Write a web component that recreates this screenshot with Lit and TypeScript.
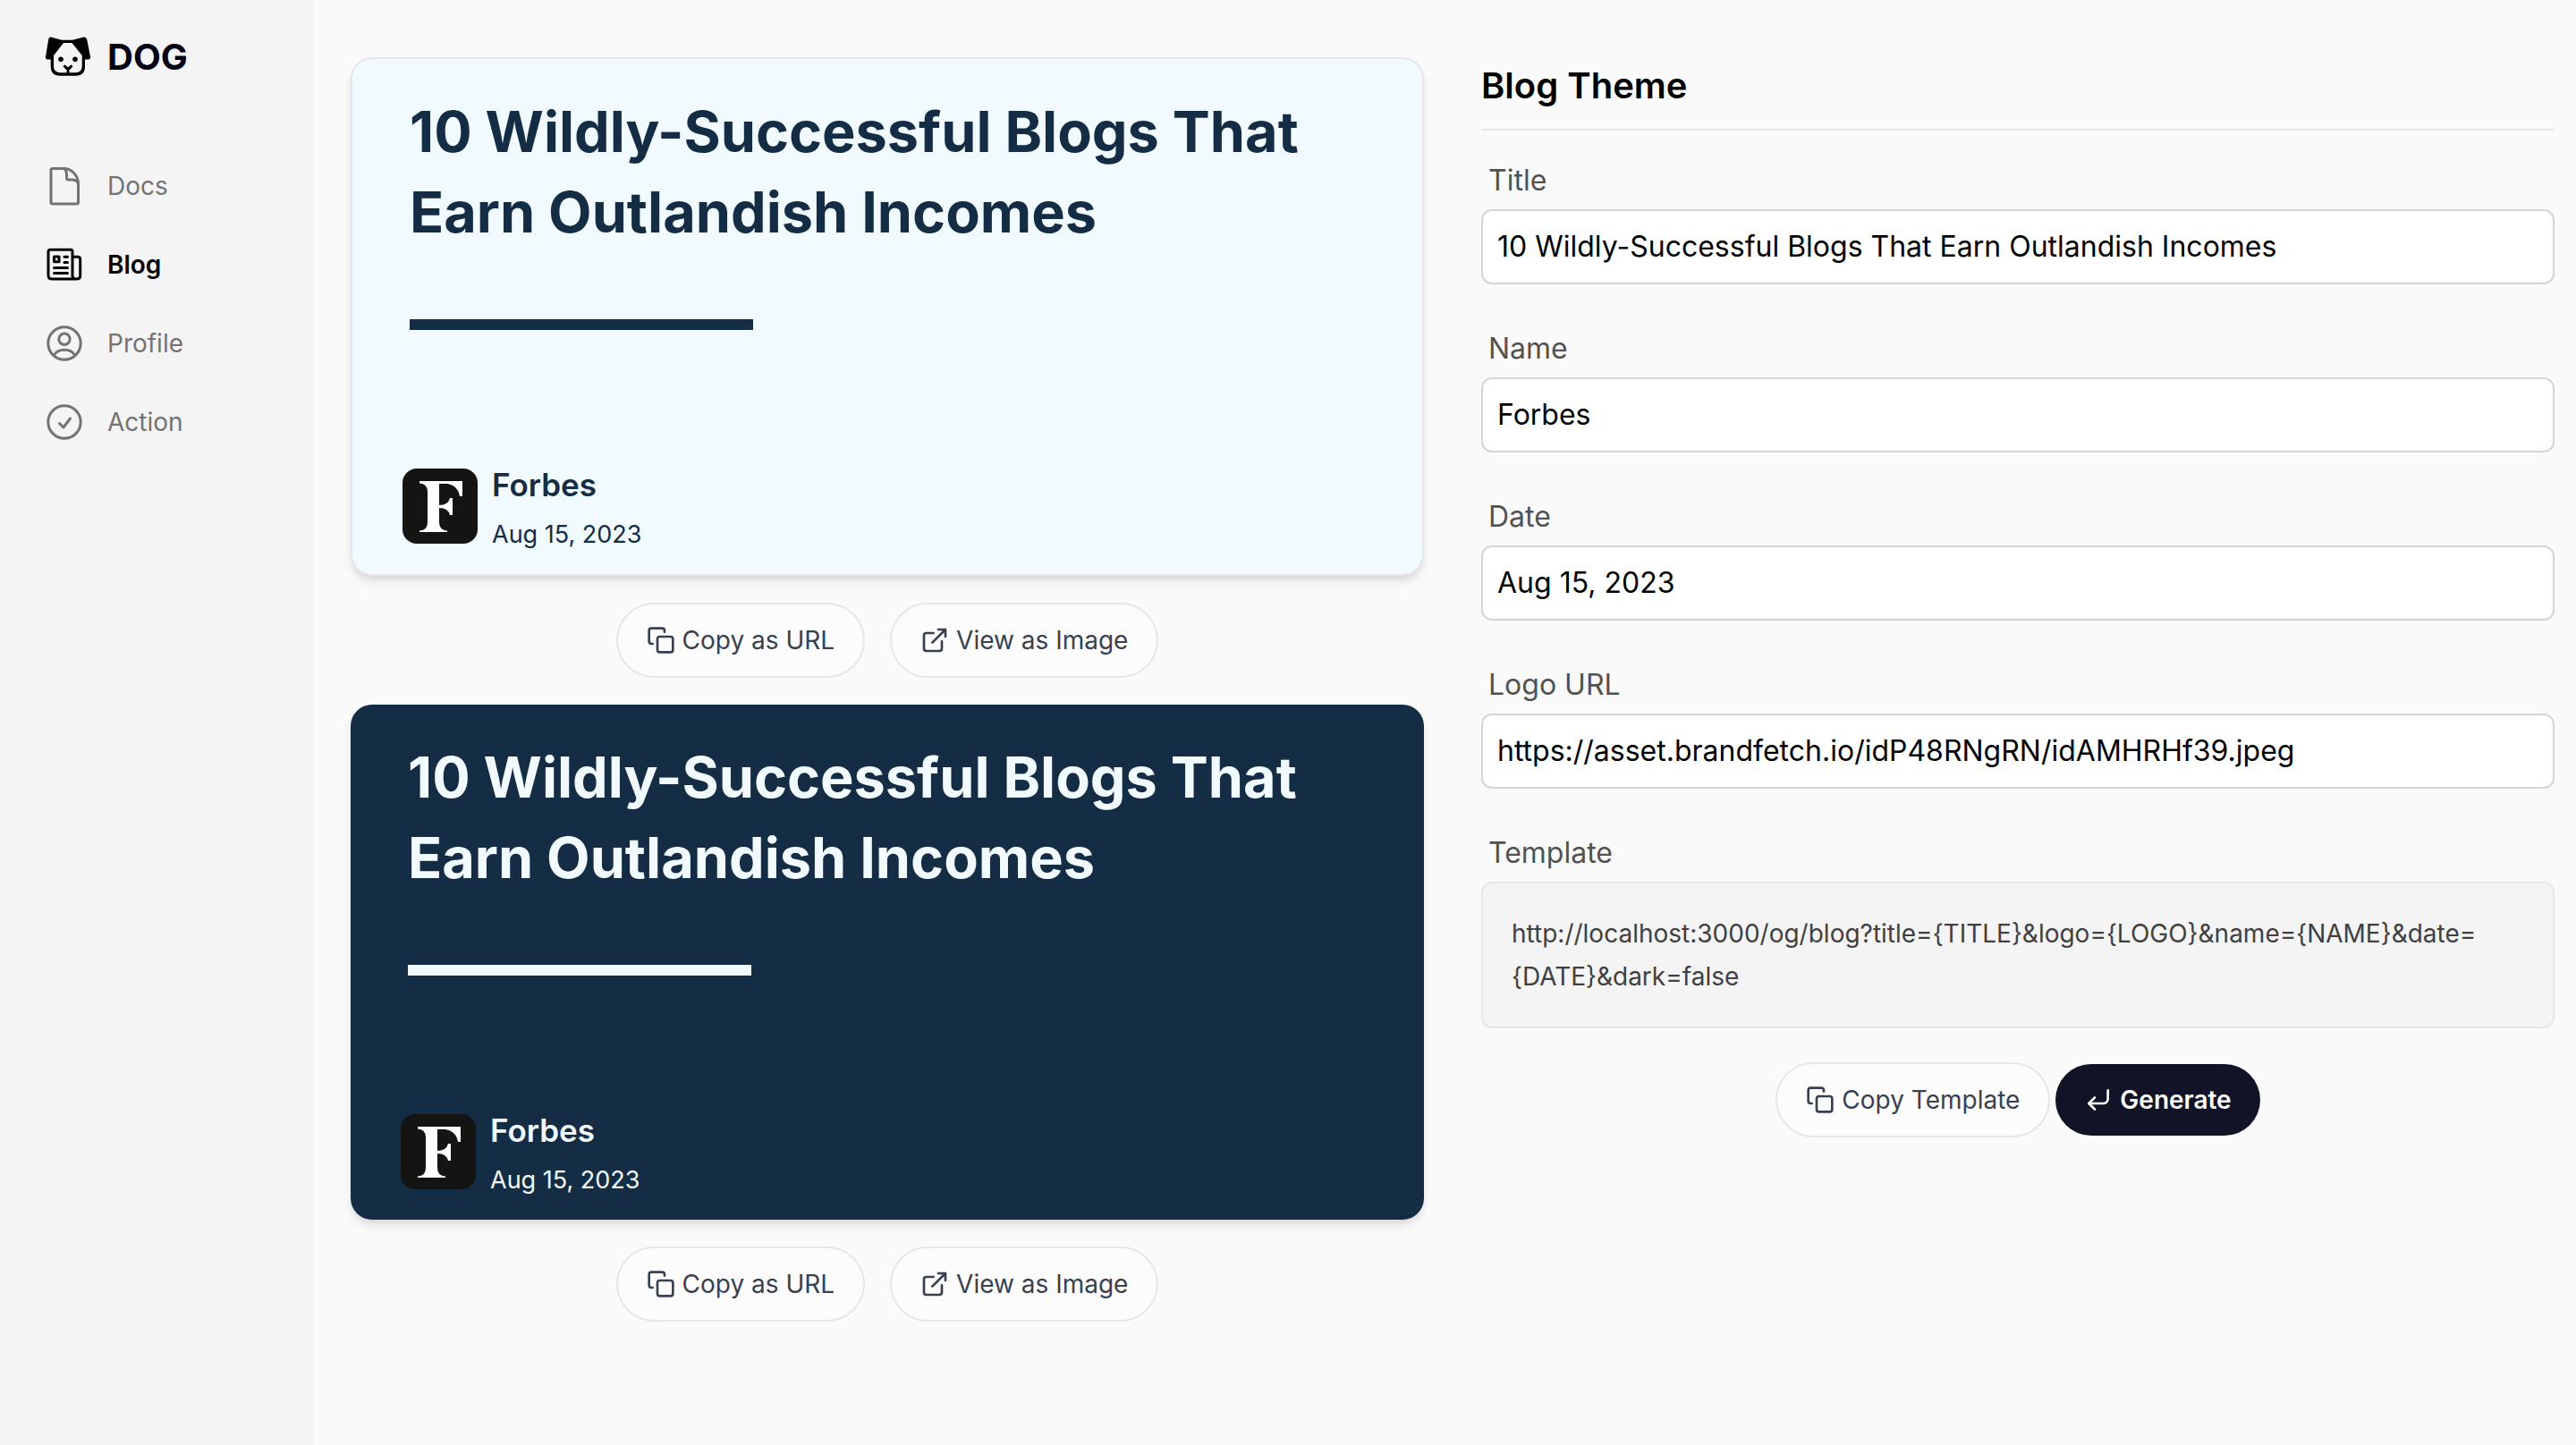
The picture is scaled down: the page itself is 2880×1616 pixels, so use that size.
import { LitElement, html, css, svg } from "lit";
import { customElement, property, state } from "lit/decorators.js";
import { classMap } from "lit/directives/class-map.js";

const logoMark = html`<svg class="mark" viewBox="0 0 54 46" aria-hidden="true">
  <path d="M9 1.500 L21 4.700 H33 L45.500 1.500 Q48.500 1 49.200 4 L53 23.500 Q53.500 26.500 50.500 26.500 H47 V34 Q47 44.700 36.500 44.700 H19 Q8.700 44.700 8.700 34 V26.500 H5.500 Q2.500 26.500 3 23.500 L6.200 4 Q6.500 1 9 1.500Z" fill="currentColor"/>
  <path d="M23 8 H32.500 L43.700 22 V34 Q43.700 41.200 36.500 41.200 H19.500 Q12 41.200 12 34 V22Z" fill="#f4f4f4"/>
  <circle cx="20" cy="26.300" r="2.800" fill="currentColor"/>
  <circle cx="36" cy="26.300" r="2.800" fill="currentColor"/>
  <path d="M24.300 34.200 L28 37.700 L31.700 34.200 M28 37.700 V42" fill="none" stroke="currentColor" stroke-width="3" stroke-linecap="round" stroke-linejoin="round"/>
</svg>`;

const navIcons: Record<string, unknown> = {
  Docs: svg`<path d="M8 2.500H21C30 2.500 37.500 10 37.500 19.500V40.500Q37.500 42 36 42H8.500Q7 42 7 40.500V4Q7 2.500 8.500 2.500M21 2.500C24 4 24.500 6.500 24.500 9V13Q24.500 15 26.500 15H30C34 15 36.500 16.500 37.500 19.500"/>`,
  Blog: svg`<path d="M6.500 5.300H29Q31 5.300 31 7.300V34.500Q31 38 35 38H8Q4 38 4 34V7.800Q4 5.300 6.500 5.300ZM31 13.300H37Q39.700 13.300 39.700 16V34.500Q39.700 38 35.500 38H35"/><path d="M10.500 13H16V18.700H10.500ZM22 13.300H25.500M22 19.600H25.500M10.500 25.500H25.500M10.500 31.500H25.500"/>`,
  Profile: svg`<circle cx="22" cy="22" r="18.200"/><circle cx="22" cy="17.300" r="6.200"/><path d="M10.500 35Q14 29.300 22 29.300T33.500 35"/>`,
  Action: svg`<circle cx="22" cy="22" r="18.200"/><path d="M16.500 23.500L21 28L28.500 18"/>`,
};

const icons: Record<string, unknown> = {
  copy: svg`<rect x="9" y="9" width="13" height="13" rx="2"/><path d="M5 15H4a2 2 0 0 1-2-2V4a2 2 0 0 1 2-2h9a2 2 0 0 1 2 2v1"/>`,
  open: svg`<path d="M18 13v6a2 2 0 0 1-2 2H5a2 2 0 0 1-2-2V8a2 2 0 0 1 2-2h6M15 3h6v6M10 14L21 3"/>`,
  enter: svg`<path d="M9 10l-5 5 5 5"/><path d="M20 4v7a4 4 0 0 1-4 4H4"/>`,
};
const icon = (name: string) =>
  html`<svg class="icon" viewBox="0 0 24 24" aria-hidden="true">${icons[name]}</svg>`;

@customElement("og-card")
export class OgCard extends LitElement {
  @property() heading = "";
  @property() name = "";
  @property() date = "";
  @property({ type: Boolean, reflect: true }) dark = false;

  static styles = css`
    :host {
      display: block;
      box-sizing: border-box;
      border: 2px solid #e5e7eb;
      border-radius: 24px;
      background: #f1fafe;
      color: #152c45;
      box-shadow: 0 8px 12px -2px rgb(0 0 0 / 0.1), 0 4px 8px -4px rgb(0 0 0 / 0.1);
    }
    :host([dark]) {
      border: 0;
      background: #152c45;
      color: #f1fafe;
    }
    .card {
      box-sizing: border-box;
      min-height: 576px;
      display: flex;
      flex-direction: column;
      padding: 36px 56px 20px;
    }
    .heading {
      margin: 0;
      padding: 0 8px;
      font-size: 63px;
      font-weight: 700;
      line-height: 90px;
      max-width: 1040px;
    }
    .rule {
      width: 384px;
      height: 12px;
      margin: 75px 8px 0;
      background: currentColor;
    }
    .author {
      display: flex;
      align-items: flex-start;
      gap: 16px;
      margin-top: auto;
    }
    .logo {
      width: 84px;
      height: 84px;
      flex: none;
      margin-top: 6px;
    }
    .who {
      display: flex;
      flex-direction: column;
      gap: 8px;
    }
    .name {
      font-size: 35px;
      line-height: 48px;
      font-weight: 600;
    }
    .date {
      font-size: 27px;
      line-height: 48px;
    }
  `;

  render() {
    return html`<article class="card">
      <h2 class="heading">${this.heading}</h2>
      <div class="rule"></div>
      <div class="author">
        <svg class="logo" viewBox="0 0 84 84" role="img" aria-label="Forbes logo">
          <rect width="84" height="84" rx="16" fill="#141413"/>
          <path fill="#fff" d="M19 14H67V31H64Q62 19 50 17H41V41Q51 41 53 33H56V52H53Q51 44 41 44V60Q41 69 50 69.500V71H19V69.500Q28 69 28 60V26Q28 17 19 16.500Z"/>
        </svg>
        <div class="who">
          <span class="name">${this.name}</span>
          <span class="date">${this.date}</span>
        </div>
      </div>
    </article>`;
  }
}

@customElement("app-root")
export class AppRoot extends LitElement {
  @state() private fields = [
    { id: "title", label: "Title", value: "10 Wildly-Successful Blogs That Earn Outlandish Incomes" },
    { id: "name", label: "Name", value: "Forbes" },
    { id: "date", label: "Date", value: "Aug 15, 2023" },
    { id: "logo", label: "Logo URL", value: "https://asset.brandfetch.io/idP48RNgRN/idAMHRHf39.jpeg" },
  ];

  static styles = css`
    :host {
      display: grid;
      grid-template-columns: 352px minmax(0, 1fr);
      min-height: 100vh;
      background: #fafafa;
      color: #000;
      font-family: Inter, "Liberation Sans", sans-serif;
      font-size: 28px;
    }
    .side {
      background: #f4f4f4;
      padding: 32px 48px;
    }
    .brand {
      display: flex;
      align-items: center;
      gap: 18px;
      height: 62px;
      color: #030014;
      font-size: 40px;
      font-weight: 700;
      text-decoration: none;
    }
    .mark {
      width: 54px;
      height: 46px;
      color: #000;
    }
    .nav {
      display: flex;
      flex-direction: column;
      gap: 40px;
      margin-top: 90px;
    }
    .link {
      display: flex;
      align-items: center;
      gap: 26px;
      height: 48px;
      padding-left: 2px;
      color: #737373;
      text-decoration: none;
    }
    .link.active {
      color: #000;
      font-weight: 600;
    }
    .glyph {
      width: 44px;
      height: 44px;
      fill: none;
      stroke: currentColor;
      stroke-width: 3;
      stroke-linecap: round;
      stroke-linejoin: round;
    }
    .main {
      display: grid;
      grid-template-columns: repeat(2, minmax(0, 1fr));
      gap: 64px;
      align-items: start;
      padding: 64px 24px 64px 40px;
    }
    .previews {
      display: flex;
      flex-direction: column;
      gap: 30px;
    }
    .actions {
      display: flex;
      justify-content: center;
      align-items: center;
      gap: 28px;
    }
    .form .actions {
      gap: 6px;
      margin-top: 38px;
    }
    .btn {
      display: flex;
      align-items: center;
      gap: 8px;
      padding: 16px 32px;
      border: 2px solid #e5e7eb;
      border-radius: 42px;
      background: #fcfcfd;
      color: #374151;
      font: inherit;
      line-height: 48px;
    }
    .btn.primary {
      border: 0;
      background: #111427;
      color: #fff;
      font-weight: 600;
    }
    .icon {
      width: 32px;
      height: 32px;
      fill: none;
      stroke: currentColor;
      stroke-width: 2;
      stroke-linecap: round;
      stroke-linejoin: round;
    }
    .title {
      margin: 0 0 32px;
      padding-bottom: 16px;
      border-bottom: 2px solid #e5e7eb;
      font-size: 40px;
      line-height: 64px;
      font-weight: 600;
    }
    .field {
      display: flex;
      flex-direction: column;
      gap: 8px;
      margin-bottom: 48px;
    }
    .label {
      padding-left: 8px;
      color: #525252;
      font-size: 32px;
      line-height: 48px;
    }
    .input {
      box-sizing: border-box;
      width: 100%;
      height: 84px;
      padding: 0 16px 2px;
      border: 2px solid #d4d4d4;
      border-radius: 12px;
      background: #fff;
      color: #000;
      font: inherit;
      font-size: 32px;
    }
    .template {
      display: block;
      padding: 32px;
      border: 2px solid #e5e7eb;
      border-radius: 12px;
      background: #f4f4f4;
      color: #404040;
      line-height: 48px;
      overflow-wrap: anywhere;
    }
    .field.last {
      margin-bottom: 0;
    }
  `;

  private onInput(id: string, e: Event) {
    const value = (e.target as HTMLInputElement).value;
    this.fields = this.fields.map((f) => (f.id === id ? { ...f, value } : f));
  }

  private preview(dark: boolean) {
    const [title, name, date] = this.fields;
    return html`<og-card
        ?dark=${dark}
        .heading=${title.value}
        .name=${name.value}
        .date=${date.value}
      ></og-card>
      <div class="actions">
        <button class="btn" type="button">${icon("copy")}Copy as URL</button>
        <button class="btn" type="button">${icon("open")}View as Image</button>
      </div>`;
  }

  render() {
    return html`
      <aside class="side">
        <a class="brand" href="#">${logoMark}DOG</a>
        <nav class="nav">
          ${Object.keys(navIcons).map(
            (name) => html`<a class=${classMap({ link: true, active: name === "Blog" })} href="#">
              <svg class="glyph" viewBox="0 0 44 44" aria-hidden="true">${navIcons[name]}</svg>${name}
            </a>`
          )}
        </nav>
      </aside>
      <main class="main">
        <section class="previews">${this.preview(false)}${this.preview(true)}</section>
        <form class="form" @submit=${(e: Event) => e.preventDefault()}>
          <h1 class="title">Blog Theme</h1>
          ${this.fields.map(
            (f) => html`<div class="field">
              <label class="label" for=${f.id}>${f.label}</label>
              <input class="input" id=${f.id} .value=${f.value}
                @input=${(e: Event) => this.onInput(f.id, e)} />
            </div>`
          )}
          <div class="field last">
            <label class="label" for="template">Template</label>
            <output class="template" id="template">http://localhost:3000/og/blog?title={TITLE}&amp;logo={LOGO}&amp;name={NAME}&amp;date={DATE}&amp;dark=false</output>
          </div>
          <div class="actions">
            <button class="btn" type="button">${icon("copy")}Copy Template</button>
            <button class="btn primary" type="submit">${icon("enter")}Generate</button>
          </div>
        </form>
      </main>
    `;
  }
}
